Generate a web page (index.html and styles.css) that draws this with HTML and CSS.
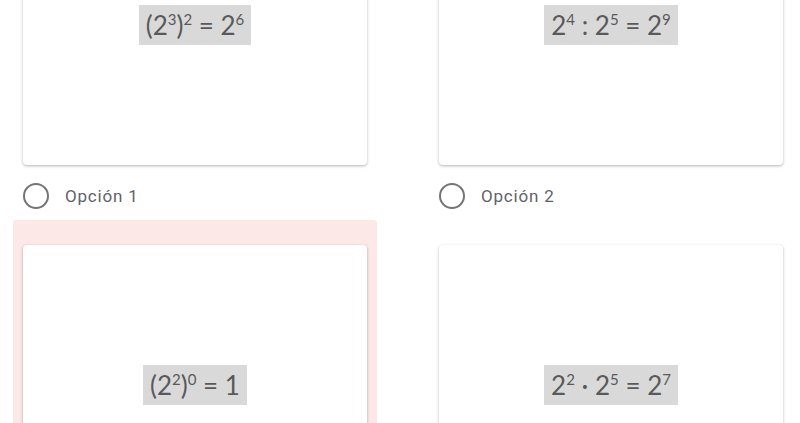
FILE: index.html
```html
<!DOCTYPE html>
<html>
<head>
    <title>Potencias - Opciones</title>
    <link rel="stylesheet" href="styles.css">
</head>
<body>
    <div class="options">
        <div class="option">
            <div class="card">
                <span class="formula">(2<sup>3</sup>)<sup>2</sup> = 2<sup>6</sup></span>
            </div>
            <label class="choice">
                <span class="radio"></span>
                <span class="choice-text">Opción 1</span>
            </label>
        </div>

        <div class="option">
            <div class="card">
                <span class="formula">2<sup>4</sup> : 2<sup>5</sup> = 2<sup>9</sup></span>
            </div>
            <label class="choice">
                <span class="radio"></span>
                <span class="choice-text">Opción 2</span>
            </label>
        </div>

        <div class="option wrong">
            <div class="card">
                <span class="formula">(2<sup>2</sup>)<sup>0</sup> = 1</span>
            </div>
            <label class="choice">
                <span class="radio"></span>
                <span class="choice-text">Opción 3</span>
            </label>
        </div>

        <div class="option">
            <div class="card">
                <span class="formula">2<sup>2</sup> · 2<sup>5</sup> = 2<sup>7</sup></span>
            </div>
            <label class="choice">
                <span class="radio"></span>
                <span class="choice-text">Opción 4</span>
            </label>
        </div>
    </div>
</body>
</html>
```

FILE: styles.css
```css
body {
    margin: 0;
    background-color: white;
    font-family: Roboto, Arial, sans-serif;
    overflow: hidden;
}
.options {
    display: grid;
    grid-template-columns: 364px 364px;
    column-gap: 52px;
    margin: -140px 0 0 13px;
}
.option {
    padding: 25px 10px 11px 10px;
    border-radius: 4px;
}
.option.wrong {
    background-color: #fce8e6;
}
.card {
    height: 280px;
    background-color: white;
    border-radius: 4px;
    box-shadow: 0 1px 3px rgba(0,0,0,0.3);
    display: flex;
    align-items: center;
    justify-content: center;
}
.formula {
    background-color: #d9d9d9;
    color: #595959;
    font-family: Lato, "Open Sans", sans-serif;
    font-size: 26px;
    line-height: 40px;
    padding: 0 7px;
    white-space: nowrap;
}
.formula sup {
    font-size: 15px;
    vertical-align: 10px;
    line-height: 0;
}
.choice {
    display: flex;
    align-items: center;
    margin-top: 18px;
    height: 26px;
}
.radio {
    width: 22px;
    height: 22px;
    border: 2px solid #757575;
    border-radius: 50%;
}
.choice-text {
    margin-left: 16px;
    font-size: 17px;
    letter-spacing: 0.8px;
    color: #5f6368;
}
```
